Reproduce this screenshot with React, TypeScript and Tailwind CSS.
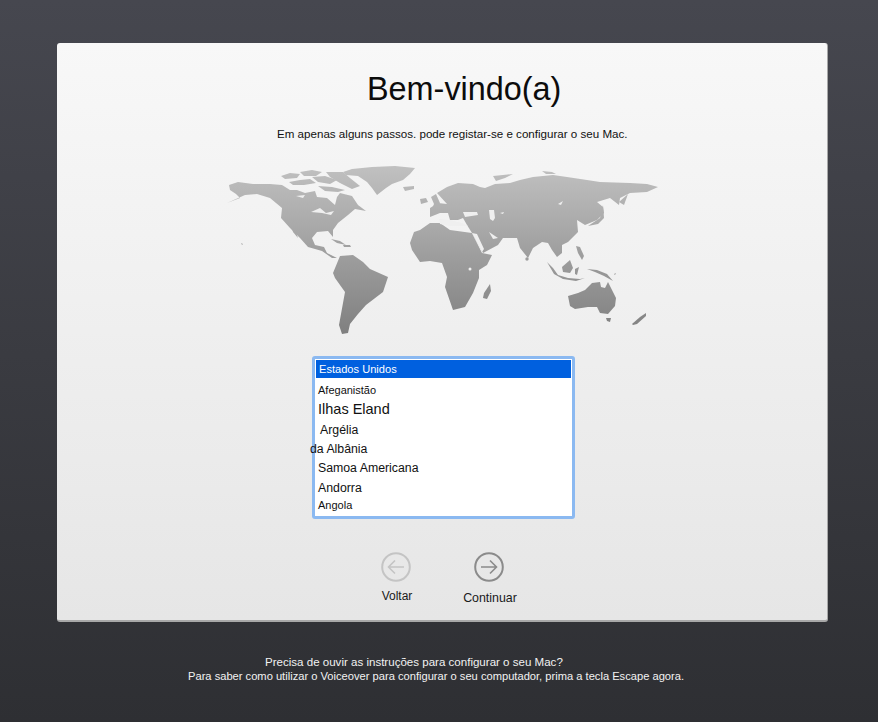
const font = "font-['Liberation_Sans',Arial,sans-serif]";

function WorldMap() {
  return (
    <svg viewBox="220 160 450 180" className="block h-[180px] w-[450px]" aria-hidden="true">
      <defs>
        <linearGradient id="land" gradientUnits="userSpaceOnUse" x1="0" y1="167" x2="0" y2="335">
          <stop offset="0" stopColor="#c0c0c0" />
          <stop offset="1" stopColor="#7f7f7f" />
        </linearGradient>
        <filter id="soft" x="-5%" y="-5%" width="110%" height="110%">
          <feGaussianBlur stdDeviation="0.4" />
        </filter>
      </defs>
      <g filter="url(#soft)">
        <g fill="url(#land)">
          {/* north america */}
          <path d="M229 185 L238 182 L253 184 L270 184 L282 185 L290 190 L297 190 L305 193 L315 191 L317 197 L327 198 L335 205 L337 197 L340 193 L352 196 L358 205 L366 211 L355 209 L348 215 L338 223 L333 230 L333 237 L328 231 L317 232 L312 238 L315 245 L324 247 L327 253 L337 258 L332 258 L322 251 L308 247 L300 238 L290 228 L281 218 L282 208 L270 198 L257 194 L245 195 L227 203 L240 198 L236 194 L230 190 Z" />
          <path d="M291 224 L296 232 L298 238 L293 232 Z" />
          {/* arctic islands */}
          <path d="M281 176 L290 173 L300 174 L297 178 L285 179 Z" />
          <path d="M300 172 L312 170 L322 172 L316 176 L304 176 Z" />
          <path d="M289 182 L300 180 L310 179 L316 183 L304 185 L293 185 Z" />
          <path d="M312 177 L325 176 L337 180 L330 184 L318 182 Z" />
          <path d="M326 172 L343 172 L350 178 L360 186 L352 189 L340 183 L330 177 Z" />
          <path d="M318 186 L332 187 L345 190 L338 192 L325 191 Z" />
          <path d="M290 192 L296 192 L297 194 L291 195 Z" />
          <path d="M300 197 L305 196 L304 198 Z" />
          {/* greenland */}
          <path d="M343 172 L352 169 L372 167 L395 166 L415 168 L410 174 L403 180 L392 184 L386 188 L377 195 L372 188 L367 182 L358 176 L346 175 Z" />
          <path d="M403 187 L414 186 L414 189 L405 191 Z" />
          {/* caribbean */}
          <path d="M331 239 L340 241 L346 245 L337 243 Z" />
          <path d="M343 245 L350 245 L351 247 L344 247 Z" />
          <path d="M241 243 L243 244 L242 245 Z" />
          {/* south america */}
          <path d="M340 256 L353 255 L363 262 L370 269 L388 277 L383 292 L366 305 L358 314 L350 324 L348 333 L342 334 L339 325 L343 303 L345 292 L335 278 L333 273 Z" />
          {/* iceland, uk */}
          <path d="M420 199 L426 198 L428 202 L421 204 Z" />
          <path d="M431 197 L436 194 L440 203 L436 211 L431 211 L434 204 Z" />
          {/* eurasia */}
          <path d="M430 217 L430 208 L438 203 L447 204 L437 193 L447 187 L458 183 L473 184 L480 187 L485 188 L495 184 L510 183 L520 180 L533 177 L553 175 L567 177 L587 180 L600 182 L630 183 L647 184 L658 187 L647 192 L630 193 L620 198 L619 205 L610 198 L597 202 L603 207 L604 213 L597 220 L585 225 L577 220 L578 232 L568 242 L562 245 L562 253 L557 257 L552 250 L548 243 L542 242 L533 248 L528 258 L520 248 L517 238 L503 238 L498 245 L483 253 L472 233 L467 225 L463 218 L458 220 L450 220 L448 213 L440 213 Z" />
          <path d="M493 176 L503 175 L513 174 L505 178 L496 181 Z" />
          <path d="M542 171 L552 172 L556 174 L546 174 Z" />
          <path d="M619 202 L628 194 L624 205 Z" />
          <path d="M588 226 L600 218 L603 205 L604 218 L598 224 Z" />
          {/* southeast asia */}
          <path d="M547 262 L553 268 L558 275 L568 278 L580 279 L585 278 L576 281 L563 279 L554 274 Z" />
          <path d="M562 267 L570 260 L573 268 L570 273 L563 272 Z" />
          <path d="M575 269 L579 267 L577 275 L575 274 Z" />
          <path d="M576 246 L580 247 L584 256 L582 260 L578 253 Z" />
          <path d="M587 269 L597 270 L607 274 L613 281 L604 276 L595 272 Z" />
          <path d="M614 274 L616 273 L615 275 Z" />
          <circle cx="527" cy="259" r="1.7" />
          {/* africa */}
          <path d="M412 250 L410 243 L414 232 L420 230 L430 223 L440 223 L450 230 L472 233 L482 253 L492 255 L487 265 L479 270 L479 278 L473 293 L465 307 L453 310 L445 287 L447 277 L442 263 L430 261 L420 262 Z" />
          <path d="M484 293 L490 284 L491 291 L487 299 L483 298 Z" />
          {/* australia */}
          <path d="M568 296 L578 293 L585 290 L592 283 L600 282 L601 287 L605 288 L608 282 L612 290 L616 298 L615 306 L608 314 L600 313 L597 307 L588 307 L575 309 L570 306 Z" />
          <path d="M606 318 L611 318 L610 322 L607 321 Z" />
          <path d="M632 324 L640 317 L646 313 L646 316 L637 324 L633 325 Z" />
        </g>
        <g fill="#efefef">
          <path d="M311 212 L320 208 L326 213 L334 211 L331 215 L322 213 Z" />
          <path d="M296 196 L305 195 L303 198 Z" />
          <path d="M439 219 L450 220 L462 223 L468 226 L450 226 L440 224 Z" />
          <path d="M463 212 L477 212 L478 215 L465 217 Z" />
          <path d="M489 210 L494 210 L495 218 L493 221 L490 219 Z" />
          <path d="M500 213 L504 212 L503 214 Z" />
          <path d="M472 233 L477 234 L484 249 L482 252 Z" />
          <path d="M489 232 L498 238 L493 239 Z" />
          <path d="M558 204 L563 201 L561 205 Z" />
          <circle cx="470" cy="269" r="1.5" />
        </g>
      </g>
    </svg>
  );
}

function NavButton({ dir, label, dim, gap }: { dir: "l" | "r"; label: string; dim?: boolean; gap: string }) {
  const colour = dim ? "#c4c4c4" : "#8b8b8b";
  return (
    <div className="flex flex-col items-center">
      <svg width="30" height="30" viewBox="0 0 30 30" fill="none" stroke={colour} strokeWidth="1.6">
        <circle cx="15" cy="15" r="13.8" strokeWidth="2" />
        {dir === "l" ? <path d="M23 15 H7.5 M14 8.5 L7.5 15 L14 21.5" /> : <path d="M7 15 H22.5 M16 8.5 L22.5 15 L16 21.5" />}
      </svg>
      <span className={`${gap} whitespace-nowrap leading-[14px] text-[#1a1a1a]`}>{label}</span>
    </div>
  );
}

export default function App() {
  return (
    <div className={`${font} flex h-[722px] w-[878px] flex-col overflow-hidden bg-gradient-to-b from-[#46474f] to-[#2e2f33] pt-[43px]`}>
      <main className="ml-[57px] flex h-[579px] w-[771px] flex-col rounded-[3px] border-r border-b-2 border-[#a8a8a8] bg-gradient-to-b from-[#f8f8f8] to-[#e6e6e6]">
        <h1 className="mt-[26px] ml-[310px] text-[32.4px] leading-10 text-[#0c0c0c]">Bem-vindo(a)</h1>
        <p className="mt-[18px] ml-[220px] text-[11.6px] leading-[14px] text-[#111]">
          Em apenas alguns passos. pode registar-se e configurar o seu Mac.
        </p>
        <div className="mt-[19px] ml-[163px]">
          <WorldMap />
        </div>
        <div className="mt-[16px] ml-[255px] h-[163px] w-[263px] rounded-[3px] border-[3px] border-[#8bb9f1] bg-white text-[12.3px] text-[#111]">
          <div className="mx-px mt-px h-[18px] bg-[#0060df] pl-[3px] text-[11.1px] leading-[18px] text-white">Estados Unidos</div>
          <div className="mt-[5px] ml-[3px] text-[11px] leading-[14px]">Afeganistão</div>
          <div className="mt-[2px] ml-[3px] text-[14.5px] leading-5">Ilhas Eland</div>
          <div className="mt-[3px] ml-[5px] leading-[16px]">Argélia</div>
          <div className="mt-[3px] -ml-[5px] leading-[16px]">da Albânia</div>
          <div className="mt-[3px] ml-[3px] leading-[16px]">Samoa Americana</div>
          <div className="mt-[4px] ml-[3px] leading-[16px]">Andorra</div>
          <div className="mt-px ml-[3px] text-[11px] leading-[16px]">Angola</div>
        </div>
        <div className="mt-[33px] ml-[324px] flex items-start">
          <div className="w-[30px]">
            <NavButton dir="l" label="Voltar" dim gap="mt-[7px] ml-[2px] text-xs" />
          </div>
          <div className="ml-[63px] w-[30px]">
            <NavButton dir="r" label="Continuar" gap="mt-[9px] ml-[2px] text-[12.4px]" />
          </div>
        </div>
      </main>
      <footer className="mt-[33px] leading-[14px] text-[#f2f2f2]">
        <p className="ml-[265px] text-[11.55px] leading-[14px]">Precisa de ouvir as instruções para configurar o seu Mac?</p>
        <p className="ml-[188px] text-[11.15px] leading-[14px]">Para saber como utilizar o Voiceover para configurar o seu computador, prima a tecla Escape agora.</p>
      </footer>
    </div>
  );
}
